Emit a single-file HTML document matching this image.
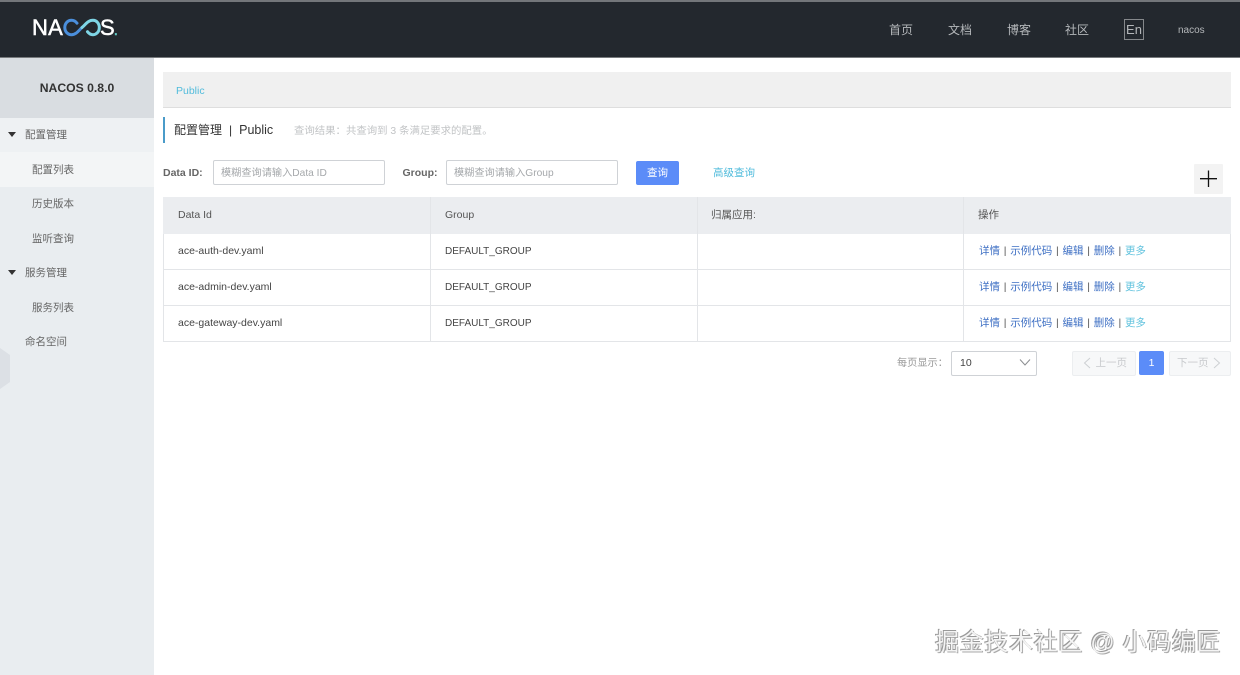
<!DOCTYPE html>
<html lang="zh">
<head>
<meta charset="utf-8">
<title>Nacos</title>
<style>
html,body{margin:0;padding:0;background:#fff}
body{position:relative;width:1240px;height:675px;overflow:hidden;font-family:"Liberation Sans","Noto Sans CJK SC",sans-serif;color:#333}
.a{position:absolute;white-space:nowrap}
.nav{top:20px;font-size:12px;line-height:18px;color:#b4b7ba;padding-top:0;margin-top:1px}
.side{left:0;width:154px;height:34.5px;line-height:35px;font-size:10.5px;color:#666}
.side span{position:absolute;white-space:nowrap}
.tri{position:absolute;left:8px;top:14px;width:0;height:0;border-left:4px solid transparent;border-right:4px solid transparent;border-top:5px solid #333}
.th,.td{position:absolute;font-size:10.5px;line-height:14px;white-space:nowrap}
.th{color:#555;top:208px}
.td{color:#444}
.line{position:absolute;background:#e3e5e8}
.ops{position:absolute;left:979px;font-size:10.5px;line-height:14px;color:#3f70c4;white-space:nowrap}
.ops i{font-style:normal;color:#555;margin:0 3.75px}
.ops b{font-weight:normal;color:#62c3de}
.input{position:absolute;top:160px;height:23px;line-height:25px;border:1px solid #cfd2d6;border-radius:2px;box-sizing:content-box;font-size:10.2px;color:#a5a8ab;padding-left:7px;background:#fff;white-space:nowrap;overflow:hidden}
.logo{position:absolute;white-space:nowrap;color:#fff;font-size:22px;line-height:27px;font-weight:normal;-webkit-text-stroke:.5px #fff}
</style>
</head>
<body>
<!-- header -->
<div class="a" style="left:0;top:0;width:1240px;height:58px;background:#23282e"></div>
<div class="a" style="left:0;top:0;width:1240px;height:1.5px;background:#73767a"></div>
<div class="a" style="left:0;top:57px;width:1240px;height:1px;background:#777a7d"></div>
<div class="logo" style="left:32px;top:14px;letter-spacing:.2px">NA</div>
<svg class="a" style="left:63px;top:18px" width="38" height="19" viewBox="0 0 38 19">
<path d="M14 5.200C12.500 3.200 10.500 2.300 8.500 2.300C4.800 2.300 1.800 5.300 1.800 9.500C1.800 13.700 4.800 16.700 8.500 16.700C13.500 16.700 16 12 19 9.500" fill="none" stroke="#4b8fdc" stroke-width="3" stroke-linecap="round"/>
<path d="M19 9.500C22.500 6.500 25 2.300 30 2.300C33.500 2.300 36.300 5.300 36.300 9.500C36.300 13.700 33.500 16.700 30 16.700C28 16.700 26 15.700 24.500 13.700" fill="none" stroke="#7fd6e6" stroke-width="3" stroke-linecap="round"/>
</svg>
<div class="logo" style="left:100px;top:14px">S<span style="color:#63cfc9;font-size:15px;margin-left:-1px;-webkit-text-stroke:.5px #63cfc9">.</span></div>
<div class="a nav" style="left:889px">首页</div>
<div class="a nav" style="left:948px">文档</div>
<div class="a nav" style="left:1007px">博客</div>
<div class="a nav" style="left:1065px">社区</div>
<div class="a" style="left:1124px;top:19px;width:18px;height:19px;border:1px solid #85888b;text-align:center;font-size:13px;line-height:19px;color:#b4b7ba">En</div>
<div class="a" style="left:1178px;top:24px;font-size:10px;line-height:14px;color:#b4b7ba">nacos</div>

<!-- sidebar -->
<div class="a" style="left:0;top:58px;width:154px;height:617px;background:#e9edf0"></div>
<div class="a" style="left:0;top:58px;width:154px;height:60px;background:#d9dde1;text-align:center;font-size:12.2px;font-weight:bold;line-height:60px;color:#333">NACOS 0.8.0</div>
<div class="a side" style="top:118px;background:#eef1f3"><div class="tri"></div><span style="left:25px">配置管理</span></div>
<div class="a side" style="top:152px;background:#f3f5f6"><span style="left:32px;top:1px">配置列表</span></div>
<div class="a side" style="top:186.500px"><span style="left:32px">历史版本</span></div>
<div class="a side" style="top:221px"><span style="left:32px;top:1px">监听查询</span></div>
<div class="a side" style="top:255.500px"><div class="tri"></div><span style="left:25px">服务管理</span></div>
<div class="a side" style="top:290px"><span style="left:32px;top:1px">服务列表</span></div>
<div class="a side" style="top:324.500px"><span style="left:25px">命名空间</span></div>
<svg class="a" style="left:0;top:348px" width="10" height="41" viewBox="0 0 10 41"><path d="M0 0L10 7V34L0 41Z" fill="#dce0e5"/></svg>

<!-- breadcrumb -->
<div class="a" style="left:163px;top:72px;width:1068px;height:36px;background:#f0f0f0;border-bottom:1px solid #dedede;box-sizing:border-box"></div>
<div class="a" style="left:176px;top:84px;font-size:10.500px;line-height:15px;color:#52bcdc">Public</div>

<!-- title -->
<div class="a" style="left:163px;top:117px;width:2px;height:26px;background:#4a9bc9"></div>
<div class="a" style="left:174px;top:122px;font-size:12px;line-height:17px;color:#333">配置管理<span style="margin:0 7px;font-size:12px">|</span><span style="font-size:12.500px">Public</span></div>
<div class="a" style="left:294px;top:125px;font-size:10.400px;line-height:14px;color:#c2c4c6">查询结果：共查询到 3 条满足要求的配置。</div>

<!-- form -->
<div class="a" style="left:163px;top:166px;font-size:10.500px;line-height:15px;font-weight:bold;color:#666">Data ID:</div>
<div class="input" style="left:213px;width:163px">模糊查询请输入Data ID</div>
<div class="a" style="left:402.500px;top:166px;font-size:10.500px;line-height:15px;font-weight:bold;color:#666">Group:</div>
<div class="input" style="left:446px;width:163px">模糊查询请输入Group</div>
<div class="a" style="left:636px;top:161px;width:43px;height:24px;background:#5b8cf8;border-radius:2px;color:#fff;font-size:10.500px;line-height:24px;text-align:center">查询</div>
<div class="a" style="left:713px;top:166px;font-size:10.500px;line-height:14px;color:#52bcdc">高级查询</div>
<div class="a" style="left:1194px;top:164px;width:29px;height:30px;background:#f3f3f3;border-radius:1px"></div>
<svg class="a" style="left:1194px;top:164px" width="29" height="30" viewBox="0 0 29 30"><path d="M14.500 6.500V23M6 14.700H23" stroke="#111" stroke-width="1.300" fill="none"/></svg>

<!-- table -->
<div class="a" style="left:163px;top:197px;width:1068px;height:37px;background:#ebedf0"></div>
<div class="line" style="left:163px;top:234px;width:1px;height:108px"></div>
<div class="line" style="left:1230px;top:234px;width:1px;height:108px"></div>
<div class="line" style="left:430px;top:197px;width:1px;height:145px"></div>
<div class="line" style="left:697px;top:197px;width:1px;height:145px"></div>
<div class="line" style="left:963px;top:197px;width:1px;height:145px"></div>
<div class="line" style="left:163px;top:269px;width:1068px;height:1px"></div>
<div class="line" style="left:163px;top:305px;width:1068px;height:1px"></div>
<div class="line" style="left:163px;top:341px;width:1068px;height:1px"></div>

<div class="th" style="left:178px">Data Id</div>
<div class="th" style="left:445px">Group</div>
<div class="th" style="left:711px">归属应用:</div>
<div class="th" style="left:978px">操作</div>

<div class="td" style="left:178px;top:244px">ace-auth-dev.yaml</div>
<div class="td" style="left:445px;top:245px;font-size:10px">DEFAULT_GROUP</div>
<div class="ops" style="top:244px">详情<i>|</i>示例代码<i>|</i>编辑<i>|</i>删除<i>|</i><b>更多</b></div>

<div class="td" style="left:178px;top:280px">ace-admin-dev.yaml</div>
<div class="td" style="left:445px;top:281px;font-size:10px">DEFAULT_GROUP</div>
<div class="ops" style="top:280px">详情<i>|</i>示例代码<i>|</i>编辑<i>|</i>删除<i>|</i><b>更多</b></div>

<div class="td" style="left:178px;top:316px">ace-gateway-dev.yaml</div>
<div class="td" style="left:445px;top:317px;font-size:10px">DEFAULT_GROUP</div>
<div class="ops" style="top:316px">详情<i>|</i>示例代码<i>|</i>编辑<i>|</i>删除<i>|</i><b>更多</b></div>

<!-- pagination -->
<div class="a" style="left:897px;top:356px;font-size:10.200px;line-height:15px;color:#999">每页显示：</div>
<div class="a" style="left:951px;top:351px;width:84px;height:22.500px;border:1px solid #cfd2d6;border-radius:2px;background:#fff"></div>
<div class="a" style="left:960px;top:356px;font-size:10.500px;line-height:14px;color:#444">10</div>
<svg class="a" style="left:1019px;top:358px" width="12" height="9" viewBox="0 0 12 9"><path d="M1 1.500L6 7L11 1.500" fill="none" stroke="#8b8e91" stroke-width="1"/></svg>

<div class="a" style="left:1072px;top:351px;width:62px;height:23px;background:#f7f8f9;border:1px solid #eceef0;border-radius:2px"></div>
<svg class="a" style="left:1083px;top:357px" width="8" height="12" viewBox="0 0 8 12"><path d="M7 1L1.500 6L7 11" fill="none" stroke="#cdd0d3" stroke-width="1"/></svg>
<div class="a" style="left:1095.500px;top:356px;font-size:10.500px;line-height:14px;color:#c8cacd">上一页</div>
<div class="a" style="left:1139px;top:351px;width:25px;height:24px;background:#5b8cf8;border-radius:2px;color:#fff;font-size:10.500px;line-height:24px;text-align:center">1</div>
<div class="a" style="left:1169px;top:351px;width:60px;height:23px;background:#f7f8f9;border:1px solid #eceef0;border-radius:2px"></div>
<div class="a" style="left:1177px;top:356px;font-size:10.500px;line-height:14px;color:#c8cacd">下一页</div>
<svg class="a" style="left:1213px;top:357px" width="8" height="12" viewBox="0 0 8 12"><path d="M1 1L6.500 6L1 11" fill="none" stroke="#cdd0d3" stroke-width="1"/></svg>

<!-- watermark -->
<div class="a" style="left:935px;top:627px;font-size:24px;letter-spacing:.65px;line-height:32px;color:#f4f4f4;text-shadow:-1px -1px 0 #999,1px 1px 0 #aaa;font-family:'Liberation Sans','Noto Sans CJK SC',sans-serif">掘金技术社区 @ 小码编匠</div>
</body>
</html>
